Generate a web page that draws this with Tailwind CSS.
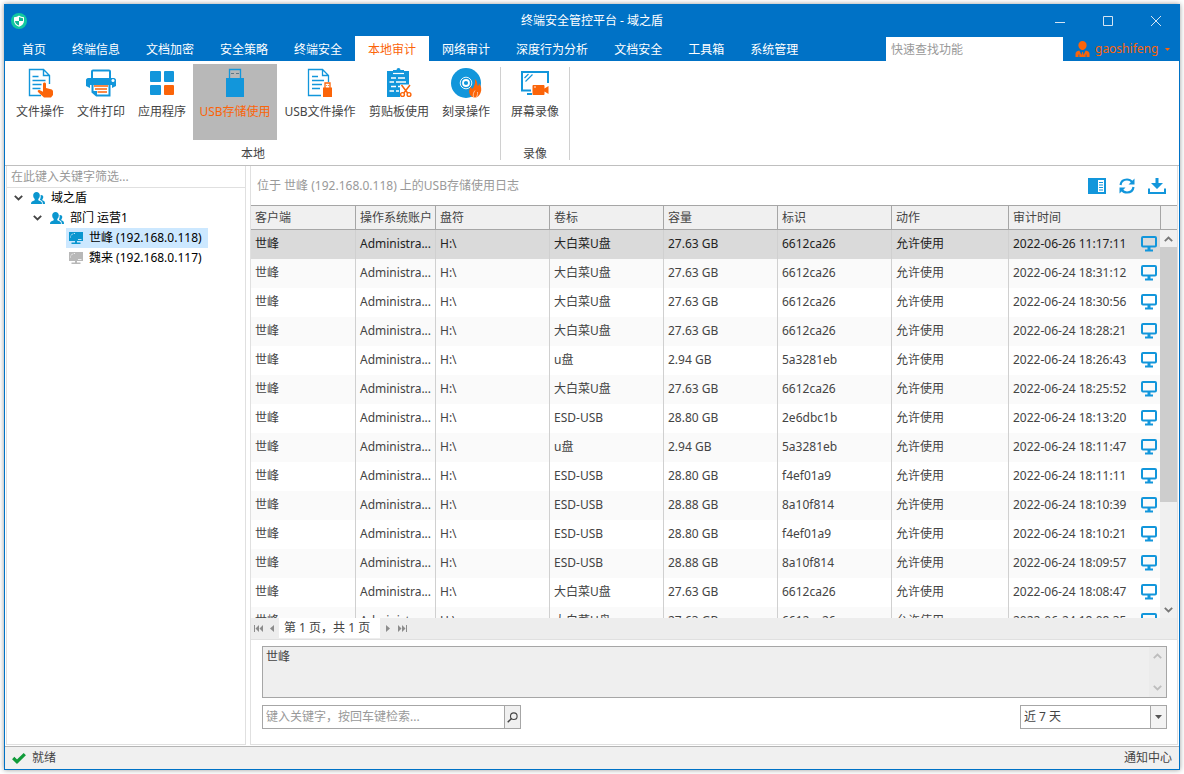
<!DOCTYPE html>
<html lang="zh-CN">
<head>
<meta charset="utf-8">
<meta name="viewport" content="width=device-width, initial-scale=1">
<title>终端安全管控平台 - 域之盾</title>
<script src="https://cdn.jsdelivr.net/npm/@tailwindcss/browser@4"></script>
</head>
<body class="h-screen bg-white p-1 font-['Noto_Sans','Noto_Sans_CJK_SC',sans-serif] text-xs text-[#444]">

<svg class="hidden" aria-hidden="true">
  <symbol id="screen" viewBox="0 0 16 16"><rect x="1" y="1" width="14" height="9.5" rx="1" fill="none" stroke="#1296db" stroke-width="2"/><path d="M6.500 11h3v2.500H12v2H4v-2h2.500z" fill="#1296db"/></symbol>
  <symbol id="people" viewBox="0 0 14 13"><path d="M8.800 3.200c0 1.600-.6 3-1.500 3.800v1.200l2.700 1.300c.7.400 1 1.300 1 2.500H0c0-1.200.3-2.100 1-2.500l2.700-1.300V7C2.800 6.200 2.200 4.800 2.200 3.200 2.200 1.300 3.600 0 5.500 0s3.300 1.300 3.300 3.200z"/><path d="M9.600 3c1.600-.2 2.700.7 2.700 2.100 0 1-.4 1.800-1 2.300v.8l1.700.9c.7.400 1 1.300 1 2.900h-2.200c0-1.600-.4-2.700-1.300-3.200L9 8V7.400c.6-1 .900-2.600.6-4.400z"/></symbol>
  <symbol id="pc" viewBox="0 0 14 12"><path d="M0 0h14v9H0zM6 9h2v1.500H6zM2.500 10.500h9V12h-9z"/><path d="M1.500 5.500v-1M2 3.500l2-2M5 1.500h1M9 7.500h3.500" fill="none" stroke="#fff" stroke-opacity=".75"/></symbol>
  <symbol id="down" viewBox="0 0 9 6"><path d="M.8.800 4.500 4.500 8.200.800" fill="none" stroke="currentColor" stroke-width="1.800"/></symbol>
</svg>

<div class="flex h-full flex-col border border-[#0072c6] bg-white shadow-[0_0_5px_rgba(0,0,0,0.4)]">
  <header class="bg-[#0072c6] text-white">
    <div class="grid h-[31px] grid-cols-[1fr_auto_1fr] items-center">
      <svg class="ml-1.5 size-4" viewBox="0 0 16 16"><circle cx="8" cy="8" r="8" fill="#12c8a0"/><path d="M8 2.500c1.500 1.200 3 1.600 5 1.700v3.500c0 3-2 4.900-5 6.100-3-1.200-5-3.100-5-6.100V4.200c2-.1 3.500-.5 5-1.700z" fill="#fff"/><path d="M8 4v4h4V5.200C10.500 5 9.300 4.700 8 4zM8 8H4c.2 2 1.600 3.500 4 4.500z" fill="#12b894"/></svg>
      <h1>终端安全管控平台 - 域之盾</h1>
      <div class="-mr-px flex justify-end">
        <button class="grid h-[31px] w-12 place-items-center" aria-label="最小化"><svg class="size-3" viewBox="0 0 12 12"><path d="M1 7.500h10" stroke="#d5e4f2"/></svg></button>
        <button class="grid h-[31px] w-12 place-items-center" aria-label="最大化"><svg class="size-3" viewBox="0 0 12 12"><path d="M1.500 1.500h9v9h-9z" fill="none" stroke="#d5e4f2"/></svg></button>
        <button class="grid h-[31px] w-12 place-items-center" aria-label="关闭"><svg class="size-3" viewBox="0 0 12 12"><path d="M1 1l10 10M11 1 1 11" stroke="#d5e4f2"/></svg></button>
      </div>
    </div>
    <div class="flex h-[25px] justify-between">
      <nav class="flex pl-1 leading-7">
        <a href="#" class="h-[25px] px-[13px]">首页</a><a href="#" class="h-[25px] px-[13px]">终端信息</a><a href="#" class="h-[25px] px-[13px]">文档加密</a><a href="#" class="h-[25px] px-[13px]">安全策略</a><a href="#" class="h-[25px] px-[13px]">终端安全</a><a href="#" class="h-[25px] bg-white px-[13px] text-[#fb6409]" aria-current="page">本地审计</a><a href="#" class="h-[25px] px-[13px]">网络审计</a><a href="#" class="h-[25px] px-[13px]">深度行为分析</a><a href="#" class="h-[25px] px-[13px]">文档安全</a><a href="#" class="h-[25px] px-[13px]">工具箱</a><a href="#" class="h-[25px] px-[13px]">系统管理</a>
      </nav>
      <div class="flex items-end pr-[9px]">
        <input type="text" aria-label="快速查找功能" placeholder="快速查找功能" class="h-6 w-[177px] bg-white px-[5px] text-[#444] outline-none placeholder:text-[#999]">
        <button class="ml-3 flex h-6 items-center text-[#fb6409]">
          <svg class="h-4 w-[15px]" viewBox="0 0 15 16" fill="#fb6409"><path d="M7.500 0c2.400 0 4.100 1.700 4.100 4.100 0 2.600-1.700 5-4.100 5S3.400 6.700 3.400 4.100C3.400 1.700 5.100 0 7.500 0z"/><path d="M4.300 9.500 6.500 14l.6-3h.8l.6 3 2.200-4.500c2.600.5 3.800 1.500 3.800 3.500V16h-3v-2.500h-.8V16H4.300v-2.500h-.8V16h-3v-3c0-2 1.200-3 3.800-3.500z"/></svg>
          <span class="ml-[5px] w-[67px] text-left">gaoshifeng</span>
          <svg class="ml-[3px] h-[3px] w-[5px]" viewBox="0 0 5 3"><path d="M0 0h5L2.500 3z" fill="#fb6409"/></svg>
        </button>
      </div>
    </div>
  </header>

  <section class="flex h-[105px] shrink-0 border-b border-[#bfbfbf]" aria-label="功能区">
    <div class="flex flex-col pt-[3px] pr-1 pl-[5px]">
      <div class="flex gap-px">
        <button class="flex h-[76px] flex-col items-center px-1.5 pt-1">
          <svg class="size-8" viewBox="0 0 32 32"><path d="M17 27.500H5.500v-26h14l6 6V16M19.500 1.500v6h6" fill="none" stroke="#1296db" stroke-width="1.400"/><path d="M8.500 8.500h6M8.500 12.500h13M8.500 16.500h9M8.500 20.500h8" stroke="#1296db" stroke-width="1.500"/><path d="M19 16c0-2 3-2 3 0v4l5 1.200c1 .2 2 1 2 2.300V27l-2 2.500h-7l-6-5.500c-1-1.500.7-2.700 2-1.700l3 1.500z" fill="#fb6409"/></svg>
          <span class="mt-[3px] leading-[18px]">文件操作</span></button>
        <button class="flex h-[76px] flex-col items-center px-1.5 pt-1">
          <svg class="size-8" viewBox="0 0 32 32"><path d="M7 10V3.500c0-.6.500-1 1-1h16c.6 0 1 .4 1 1V10" fill="none" stroke="#1296db" stroke-width="2"/><path d="M3 10h26c1 0 2 1 2 2v6l-4 2V17H5v3l-4-2v-6c0-1 1-2 2-2z" fill="#1296db"/><circle cx="28" cy="12.500" r="1.500" fill="#fff"/><path d="M7.500 17v7l4 3.500h13V17" fill="#fff" stroke="#1296db" stroke-width="2"/><path d="M7 23h5v5z" fill="#1296db"/><path d="M9 18h14M10 21h12M12.500 24h9.500" stroke="#fb6409" stroke-width="1.500"/></svg>
          <span class="mt-[3px] leading-[18px]">文件打印</span></button>
        <button class="flex h-[76px] flex-col items-center px-1.5 pt-1">
          <svg class="size-8" viewBox="0 0 32 32"><g fill="#1296db"><rect x="4" y="3" width="11" height="11" rx="1"/><rect x="18" y="3" width="10" height="11" rx="1"/><rect x="4" y="17" width="11" height="10" rx="1"/></g><rect x="18" y="17" width="10" height="10" rx="1" fill="#fb6409"/></svg>
          <span class="mt-[3px] leading-[18px]">应用程序</span></button>
        <button class="flex h-[76px] w-[84px] flex-col items-center bg-[#b8b8b8] pt-1 text-[#fb6409]" aria-pressed="true">
          <svg class="size-8" viewBox="0 0 32 32"><path d="M10.500 10V1.500h11V10" fill="none" stroke="#1296db" stroke-width="1.300"/><path d="M12 5.500h3M17 5.500h3" stroke="#5e7785" stroke-width="1.200"/><path d="M7 10h18v19H7z" fill="#1296db"/></svg>
          <span class="mt-[3px] leading-[18px]">USB存储使用</span></button>
        <button class="flex h-[76px] w-[84px] flex-col items-center pt-1">
          <svg class="size-8" viewBox="0 0 32 32"><path d="M17 27.500H4.500V1.500h14l6 6V14M18.500 1.500v6h6" fill="none" stroke="#1296db" stroke-width="1.300"/><path d="M8 8.500h6M8 12.500h12M8 16.500h10M8 20.500h8" stroke="#1296db" stroke-width="1.500"/><path d="M21 20v-5h5v5" fill="#fff" stroke="#fb6409" stroke-width="1.300"/><path d="M22.300 17.500h.8M24 17.500h.8" stroke="#fb6409"/><path d="M19 19.500h9V29h-9z" fill="#fb6409"/></svg>
          <span class="mt-[3px] leading-[18px]">USB文件操作</span></button>
        <button class="flex h-[76px] flex-col items-center px-1.5 pt-1">
          <svg class="size-8" viewBox="0 0 32 32"><path d="M4 3h6V2h3.500a2 2 0 0 1 4 0H21v1h5v26H4z" fill="#1296db"/><path d="M10 5.500h11" stroke="#fff" stroke-width="1.200"/><path d="M8 10h5m2 0h7M6.500 14H11m2 0h10M8 18.500h5m2 0h4M6.500 23H11m2 0h3" stroke="#fff" stroke-width="1.300"/><path d="M17 16.500h11V29H17z" fill="#fff"/><path d="m18.500 17 6.500 8.500M27 17l-6.500 8.500" stroke="#fb6409" stroke-width="1.500"/><g fill="#fff" stroke="#fb6409" stroke-width="1.400"><circle cx="19.500" cy="26.500" r="1.900"/><circle cx="26" cy="26.500" r="1.900"/></g></svg>
          <span class="mt-[3px] leading-[18px]">剪贴板使用</span></button>
        <button class="flex h-[76px] flex-col items-center px-1.5 pt-1">
          <svg class="size-8" viewBox="0 0 32 32"><circle cx="16" cy="15" r="15" fill="#1296db"/><circle cx="16" cy="15" r="5.800" fill="none" stroke="#fff" stroke-width=".9"/><circle cx="16" cy="15" r="3" fill="#1296db" stroke="#fff" stroke-width="1.800"/><path d="M25 11c3 2.500 1.800 5.500 3 7 .8-.5 1-1.500.8-3 2.500 3 3.200 6.500 1.700 10-1 2.500-3 4.500-5.500 4.500s-5.200-1.500-5.700-4.500c-.5-2.500.3-4.500 1.700-6.500.2 1.200.5 2 1.200 2.500 2.300-2.500 3.300-6 2.800-10z" fill="#fb6409"/><path d="M25 22.500c-1.500 2-2.200 4-1.500 6.500M27.500 24c.2 2-.1 3.500-1 5" stroke="#fff" stroke-width=".6" fill="none"/></svg>
          <span class="mt-[3px] leading-[18px]">刻录操作</span></button>
      </div>
      <p class="mt-[5px] text-center leading-[18px]">本地</p>
    </div>
    <div class="mt-1.5 mb-[5px] w-px bg-[#d0d0d0]"></div>
    <div class="flex flex-col px-1 pt-[3px]">
      <button class="flex h-[76px] flex-col items-center px-1.5 pt-1">
        <svg class="size-8" viewBox="0 0 32 32"><path d="M12 22.500H3V4h26v11" fill="none" stroke="#1296db" stroke-width="2"/><path d="m5.500 10 4-4M6.500 13.500l7-7" stroke="#1296db" stroke-width="1.200"/><path d="M8 26h5" stroke="#1296db" stroke-width="2"/><path d="M14.500 17h10c.6 0 1 .5 1 1v2.500l4-2.500v8l-4-2.500V26c0 .6-.4 1-1 1h-10c-.6 0-1-.4-1-1v-8c0-.5.400-1 1-1z" fill="#fb6409"/><circle cx="16" cy="19" r=".8" fill="#fff"/></svg>
        <span class="mt-[3px] leading-[18px]">屏幕录像</span></button>
      <p class="mt-[5px] text-center leading-[18px]">录像</p>
    </div>
    <div class="mt-1.5 mb-[5px] w-px bg-[#d0d0d0]"></div>
  </section>

  <div class="flex min-h-0 flex-1 gap-1 pr-px pb-px">
    <aside class="ml-px w-[240px] shrink-0 border-x border-b border-[#e0e0e0]">
      <input type="text" aria-label="筛选" placeholder="在此键入关键字筛选..." class="block h-[22px] w-full border-b border-[#e0e0e0] px-1 outline-none placeholder:text-[#999]">
      <ul class="text-black">
        <li class="flex h-5 items-center pl-[7px]"><svg class="mr-2 h-1.5 w-[9px] text-[#444]"><use href="#down"/></svg><svg class="mr-1.5 h-[13px] w-3.5" fill="#0a96cf"><use href="#people"/></svg>域之盾</li>
        <li class="flex h-5 items-center pl-[26px]"><svg class="mr-2 h-1.5 w-[9px] text-[#444]"><use href="#down"/></svg><svg class="mr-1.5 h-[13px] w-3.5" fill="#0a96cf"><use href="#people"/></svg>部门 运营1</li>
        <li class="flex pl-[59px]"><button class="flex h-5 w-[142px] items-center bg-[#cce8ff] pl-[3px]"><svg class="mr-1.5 h-3 w-3.5" fill="#0a96cf"><use href="#pc"/></svg>世峰 (192.168.0.118)</button></li>
        <li class="flex pl-[59px]"><button class="flex h-5 w-[142px] items-center pl-[3px]"><svg class="mr-1.5 h-3 w-3.5" fill="#b8b8b8"><use href="#pc"/></svg>魏来 (192.168.0.117)</button></li>
      </ul>
    </aside>

    <main class="flex min-w-0 flex-1 flex-col border-x border-b border-[#e0e0e0]">
      <div class="flex h-[39px] shrink-0 items-center justify-between pr-[11px] pl-1.5">
        <h2 class="text-[#999]">位于 世峰 (192.168.0.118) 上的USB存储使用日志</h2>
        <div class="flex gap-3">
          <button aria-label="列设置"><svg class="size-[18px]" viewBox="0 0 18 18"><path d="M0 1h18v16H0z" fill="#1296db"/><path d="M10 3h6v12h-6z" fill="#fff"/><path d="M11 5.500h4M11 8h4M11 10.500h4M11 13h4" stroke="#1296db" stroke-width="1.200"/></svg></button>
          <button aria-label="刷新"><svg class="size-[18px]" viewBox="0 0 18 18"><path d="M2.500 8C3 4.500 5.500 2.500 9 2.500c2.200 0 4 .9 5.200 2.500M15.500 10c-.5 3.500-3 5.500-6.500 5.500-2.200 0-4-.9-5.200-2.500" fill="none" stroke="#1296db" stroke-width="2.200"/><path d="M16.500 1.500v6h-6zM1.500 16.500v-6h6z" fill="#1296db"/></svg></button>
          <button aria-label="下载"><svg class="size-[18px]" viewBox="0 0 18 18"><path d="M7.500 1h3v5H15l-6 6-6-6h4.500z" fill="#1296db"/><path d="M1 11.500V16h16v-4.500" fill="none" stroke="#1296db" stroke-width="2"/></svg></button>
        </div>
      </div>

      <div class="relative min-h-0 flex-1 overflow-hidden border-t border-[#a6a6a6]">
        <table class="w-full table-fixed border-separate border-spacing-0 text-left">
          <colgroup><col class="w-[105px]"><col class="w-[80px]"><col class="w-[114px]"><col class="w-[114px]"><col class="w-[114px]"><col class="w-[114px]"><col class="w-[117px]"><col><col class="w-4"></colgroup>
          <thead>
            <tr id="head" class="h-6 bg-[#f0f0f0]"></tr>
          </thead>
          <tbody id="rows"></tbody>
        </table>
        <div class="absolute top-6 right-0 bottom-0 flex w-[17px] flex-col items-center bg-[#f0f0f0] text-[#777]">
          <span class="grid h-[17px] w-full place-items-center"><svg class="h-1.5 w-[9px] rotate-180"><use href="#down"/></svg></span>
          <span class="h-[255px] w-full bg-[#cdcdcd]"></span>
          <span class="mt-auto grid h-[17px] w-full place-items-center"><svg class="h-1.5 w-[9px]"><use href="#down"/></svg></span>
        </div>
      </div>

      <div class="flex h-[22px] shrink-0 items-start border-b border-[#e0e0e0] bg-[#ededed]">
        <button class="flex h-5 items-center pl-[3px]" aria-label="首页"><svg class="h-[7px] w-[9px]" viewBox="0 0 9 7" fill="#8c8c8c"><path d="M0 0h1v7H0zM5 0v7L1.500 3.500zM9 0v7L5.500 3.500z"/></svg></button>
        <button class="flex h-5 items-center pl-[7px]" aria-label="上一页"><svg class="h-[7px] w-1" viewBox="0 0 4 7" fill="#8c8c8c"><path d="M4 0v7L0 3.500z"/></svg></button>
        <span class="ml-[5px] h-5 w-[101px] bg-white pl-[5px] leading-5">第 1 页，共 1 页</span>
        <button class="flex h-5 items-center pl-1.5" aria-label="下一页"><svg class="h-[7px] w-1" viewBox="0 0 4 7" fill="#8c8c8c"><path d="M0 0v7l4-3.500z"/></svg></button>
        <button class="flex h-5 items-center pl-2" aria-label="末页"><svg class="h-[7px] w-[9px]" viewBox="0 0 9 7" fill="#8c8c8c"><path d="M8 0h1v7H8zM0 0v7l3.500-3.500zM4 0v7l3.500-3.500z"/></svg></button>
      </div>

      <div class="flex shrink-0 flex-col gap-[7px] px-2.5 pt-1.5 pb-[15px] pl-[11px]">
        <div class="flex h-[52px] border border-[#a6a6a6] bg-[#efefef]">
          <textarea readonly aria-label="详情" class="h-full flex-1 resize-none overflow-hidden px-[3px] pt-0.5 leading-4 outline-none">世峰</textarea>
          <div class="flex w-[17px] flex-col items-center justify-between bg-[#ebebeb] py-1.5 text-[#bdbdbd]"><svg class="h-1.5 w-[9px] rotate-180"><use href="#down"/></svg><svg class="h-1.5 w-[9px]"><use href="#down"/></svg></div>
        </div>
        <div class="flex h-6 justify-between">
          <div class="flex border border-[#a6a6a6]">
            <input type="text" aria-label="检索" placeholder="键入关键字，按回车键检索..." class="w-[241px] px-[3px] outline-none placeholder:text-[#999]">
            <button aria-label="搜索" class="grid w-4 place-items-center border-l border-[#a6a6a6] bg-[#f0f0f0]"><svg class="size-[11px]" viewBox="0 0 11 11"><circle cx="6.800" cy="4.200" r="3.300" fill="none" stroke="#444" stroke-width="1.100"/><path d="M4.500 6.500.7 10.300" stroke="#444" stroke-width="1.500"/></svg></button>
          </div>
          <div class="relative w-[147px]">
            <select aria-label="时间范围" class="h-6 w-full appearance-none border border-[#a6a6a6] bg-white px-[3px] outline-none"><option>近 7 天</option></select>
            <span class="pointer-events-none absolute top-px right-px bottom-px grid w-4 place-items-center border-l border-[#a6a6a6] bg-[#f3f3f3]"><svg class="h-1 w-[7px]" viewBox="0 0 7 4"><path d="M0 0h7L3.500 4z" fill="#555"/></svg></span>
          </div>
        </div>
      </div>
    </main>
  </div>

  <footer class="flex h-[23px] shrink-0 items-center justify-between border-t border-[#b5b5b5] bg-[#f0f0f0] px-[7px] leading-6">
    <span class="flex items-center gap-1.5"><svg class="h-[11px] w-3.5" viewBox="0 0 14 11"><path d="M1.200 5 5 8.700 12.800 1.200" fill="none" stroke="#109b3a" stroke-width="3.200"/></svg>就绪</span>
    <a href="#">通知中心</a>
  </footer>
</div>

<script>
const heads = ['客户端', '操作系统账户', '盘符', '卷标', '容量', '标识', '动作', '审计时间', ''];
const W = '大白菜U盘', E = 'ESD-USB';
const logs = [
  [W, '27.63', '6612ca26', '26 11:17:11'], [W, '27.63', '6612ca26', '24 18:31:12'], [W, '27.63', '6612ca26', '24 18:30:56'],
  [W, '27.63', '6612ca26', '24 18:28:21'], ['u盘', '2.94', '5a3281eb', '24 18:26:43'], [W, '27.63', '6612ca26', '24 18:25:52'],
  [E, '28.80', '2e6dbc1b', '24 18:13:20'], ['u盘', '2.94', '5a3281eb', '24 18:11:47'], [E, '28.80', 'f4ef01a9', '24 18:11:11'],
  [E, '28.88', '8a10f814', '24 18:10:39'], [E, '28.80', 'f4ef01a9', '24 18:10:21'], [E, '28.88', '8a10f814', '24 18:09:57'],
  [W, '27.63', '6612ca26', '24 18:08:47'], [W, '27.63', '6612ca26', '24 18:08:35'],
];
document.getElementById('head').innerHTML = heads.map((h, i) =>
  `<th class="${i < 8 ? 'border-r ' : ''}overflow-hidden border-b border-[#a6a6a6] px-1 py-0 font-normal whitespace-nowrap">${h}</th>`).join('');
document.getElementById('rows').innerHTML = logs.map(([vol, size, id, time], i) => {
  const bg = i === 0 ? 'bg-[#dadada] text-[#222]' : i % 2 ? 'bg-[#fafafa]' : 'bg-white';
  const cells = ['世峰', 'Administra...', 'H:\\', vol, size + ' GB', id, '允许使用'].map(t =>
    `<td class="overflow-hidden border-r border-[#d0d0d0] px-1 pt-0 pb-0.5 whitespace-nowrap">${t}</td>`).join('');
  return `<tr class="h-[29px] ${bg}">${cells}<td class="px-1 pt-0 pb-0.5"><div class="flex items-center justify-between whitespace-nowrap"><span>2022-06-${time}</span><svg class="size-4 shrink-0"><use href="#screen"/></svg></div></td><td></td></tr>`;
}).join('');
</script>
</body>
</html>
